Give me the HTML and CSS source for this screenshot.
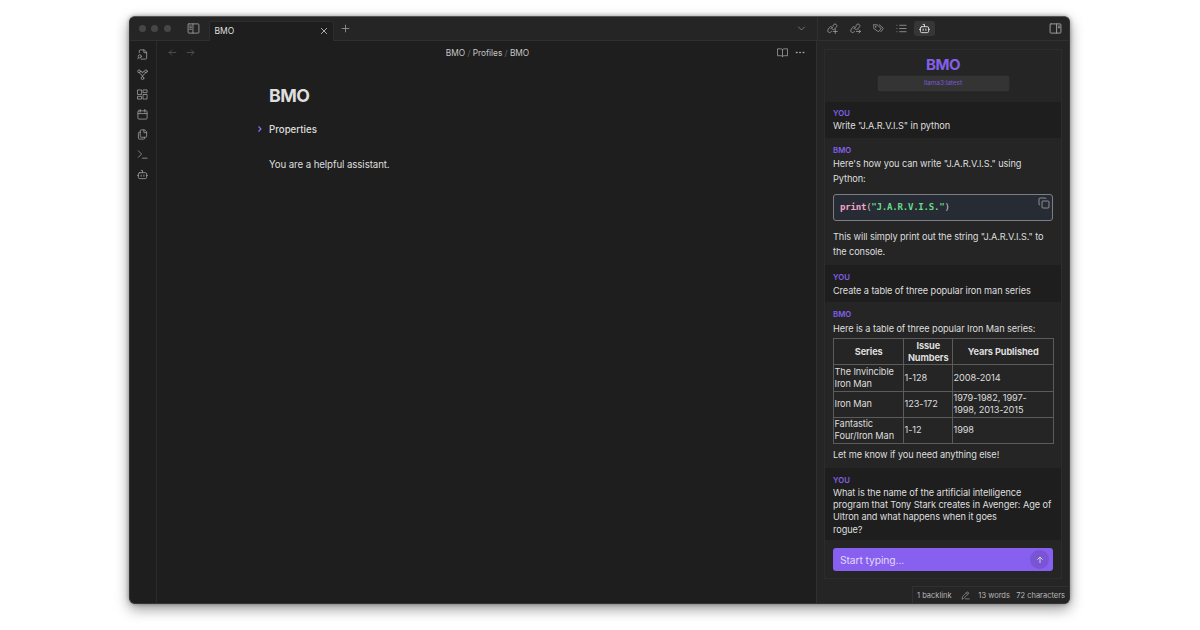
FILE: index.html
```html
<!DOCTYPE html>
<html lang="en">
<head>
<meta charset="utf-8">
<title>BMO</title>
<link rel="stylesheet" href="styles.css">
</head>
<body>
<div class="window">
  <header class="titlebar">
    <div class="lights"><i></i><i></i><i></i></div>
    <svg class="icon toggle-left" viewBox="0 0 24 24"><rect x="2" y="3.500" width="20" height="17" rx="1.500"/><path d="M11 3.500v17M5 7.500h3M5 10.500h3M5 13.500h3"/></svg>
    <div class="tab"><span>BMO</span><svg class="icon close" viewBox="0 0 24 24"><path d="M4 4l16 16M20 4L4 20"/></svg></div>
    <svg class="icon plus" viewBox="0 0 24 24"><path d="M12 3v18M3 12h18"/></svg>
    <svg class="icon chevron" viewBox="0 0 24 24"><path d="M4 8l8 8 8-8"/></svg>
    <div class="side-tabs">
      <svg class="icon" viewBox="0 0 24 24"><path d="M8 13l5-5M13 6l2-3a4 4 0 0 1 6 5l-4 5a4 4 0 0 1-6 0M11 9a4 4 0 0 0-6 1l-3 5a4 4 0 0 0 6 5l2-2M18 14v9M13.500 18.500h9"/></svg>
      <svg class="icon" viewBox="0 0 24 24"><path d="M8 13l5-5M13 6l2-3a4 4 0 0 1 6 5l-4 5a4 4 0 0 1-6 0M11 9a4 4 0 0 0-6 1l-3 5a4 4 0 0 0 6 5l2-2M14 18.500h9M19.500 15l3.500 3.500-3.500 3.500"/></svg>
      <svg class="icon" viewBox="0 0 24 24"><path d="M1 4h8l8 7a2 2 0 0 1 0 2l-4 5a2 2 0 0 1-3 0L1 11zM14 4l8 7a2 2 0 0 1 0 2l-5 6"/><circle cx="5.500" cy="8.500" r=".7"/></svg>
      <svg class="icon" viewBox="0 0 24 24"><path d="M8 5h14M8 12h14M8 19h14M2 5h.1M2 12h.1M2 19h.1"/></svg>
      <span class="active-tab"><svg class="icon bright" viewBox="0 0 24 24"><rect x="3" y="8" width="18" height="13" rx="3"/><path d="M12 8V3H9M1 14h2M21 14h2M9 13v3M15 13v3"/></svg></span>
    </div>
    <svg class="icon toggle-right" viewBox="0 0 24 24"><rect x="2" y="3.500" width="20" height="17" rx="1.500"/><path d="M14 3.500v17M17 7.500h3M17 10.500h3"/></svg>
  </header>
  <div class="body">
    <nav class="ribbon">
      <svg class="icon" viewBox="0 0 24 24"><path d="M5 8V4a2 2 0 0 1 2-2h9l5 5v13a2 2 0 0 1-2 2H9M15 2v6h6M4 19l-3 3"/><circle cx="6" cy="16" r="3.500"/></svg>
      <svg class="icon" viewBox="0 0 24 24"><circle cx="4.500" cy="5" r="3"/><circle cx="19.500" cy="5" r="3"/><circle cx="12" cy="20" r="3"/><path d="M5 8c0 4 7 3 7 9 0-6 7-5 7-9M10 5l2 4 2-4"/></svg>
      <svg class="icon" viewBox="0 0 24 24"><rect x="2" y="2" width="8" height="10"/><rect x="14" y="2" width="8" height="6"/><rect x="14" y="12" width="8" height="10"/><rect x="2" y="16" width="8" height="6"/></svg>
      <svg class="icon" viewBox="0 0 24 24"><rect x="2" y="4" width="20" height="18" rx="2"/><path d="M7 1v6M17 1v6M2 10h20"/></svg>
      <svg class="icon" viewBox="0 0 24 24"><path d="M16 2H9a2 2 0 0 0-2 2v12a2 2 0 0 0 2 2h10a2 2 0 0 0 2-2V7zM15 2v6h6M7 7H5a2 2 0 0 0-2 2v11a2 2 0 0 0 2 2h10a2 2 0 0 0 2-2v-2"/></svg>
      <svg class="icon" viewBox="0 0 24 24"><path d="M3 18l7-7-7-7M12 20h10"/></svg>
      <svg class="icon" viewBox="0 0 24 24"><rect x="3" y="8" width="18" height="13" rx="3"/><path d="M12 8V3H9M1 14h2M21 14h2M9 13v3M15 13v3"/></svg>
    </nav>
    <main class="editor">
      <div class="view-header">
        <div class="history"><svg class="icon" viewBox="0 0 24 24"><path d="M21 12H3M10 5l-7 7 7 7"/></svg><svg class="icon" viewBox="0 0 24 24"><path d="M3 12h18M14 5l7 7-7 7"/></svg></div>
        <div class="crumbs">BMO <b>/</b> Profiles <b>/</b> BMO</div>
        <div class="view-actions"><svg class="icon" viewBox="0 0 24 24"><path d="M12 6c-1-1.500-2-2-4-2H1v15h7c2 0 3 .5 4 2 1-1.500 2-2 4-2h7V4h-7c-2 0-3 .5-4 2zM12 6v15"/></svg><svg class="icon dots" viewBox="0 0 24 24"><circle cx="4" cy="12" r="1.300"/><circle cx="12" cy="12" r="1.300"/><circle cx="20" cy="12" r="1.300"/></svg></div>
      </div>
      <article class="note">
        <h1>BMO</h1>
        <div class="properties"><svg viewBox="0 0 8 8"><path d="M2.500 1.500L5 4 2.500 6.500"/></svg><span>Properties</span></div>
        <p>You are a helpful assistant.</p>
      </article>
    </main>
    <aside class="sidebar">
      <section class="chat">
        <div class="chat-head"><h2>BMO</h2><div class="model">llama3:latest</div></div>
        <div class="message user"><h3>YOU</h3><p>Write "J.A.R.V.I.S" in python</p></div>
        <div class="message bot first">
          <h3>BMO</h3>
          <p>Here's how you can write "J.A.R.V.I.S." using<br>Python:</p>
          <div class="code"><code><b>print</b>(<em>"J.A.R.V.I.S."</em>)</code><svg viewBox="0 0 24 24"><rect x="8" y="8" width="14" height="14" rx="2"/><path d="M4 16a2 2 0 0 1-2-2V4a2 2 0 0 1 2-2h10a2 2 0 0 1 2 2"/></svg></div>
          <p>This will simply print out the string "J.A.R.V.I.S." to<br>the console.</p>
        </div>
        <div class="message user second"><h3>YOU</h3><p>Create a table of three popular iron man series</p></div>
        <div class="message bot answer">
          <h3>BMO</h3>
          <p>Here is a table of three popular Iron Man series:</p>
          <table>
            <colgroup><col class="c1"><col class="c2"><col class="c3"></colgroup>
            <tr><th>Series</th><th>Issue<br>Numbers</th><th>Years Published</th></tr>
            <tr><td>The Invincible<br>Iron Man</td><td>1-128</td><td>2008-2014</td></tr>
            <tr><td>Iron Man</td><td>123-172</td><td>1979-1982, 1997-<br>1998, 2013-2015</td></tr>
            <tr><td>Fantastic<br>Four/Iron Man</td><td>1-12</td><td>1998</td></tr>
          </table>
          <p>Let me know if you need anything else!</p>
        </div>
        <div class="message user last"><h3>YOU</h3><p>What is the name of the artificial intelligence<br>program that Tony Stark creates in Avenger: Age of<br>Ultron and what happens when it goes<br>rogue?</p></div>
        <div class="prompt"><span>Start typing...</span><i><svg viewBox="0 0 24 24"><path d="M12 21V3M4 11l8-8 8 8"/></svg></i></div>
      </section>
      <footer class="status"><span>1 backlink</span><svg class="icon" viewBox="0 0 24 24"><path d="M12 21h10M3 21l1-6L16 3a3 3 0 0 1 4 4L8 19zM14 5l4 4"/></svg><span>13 words</span><span>72 characters</span></footer>
    </aside>
  </div>
</div>
</body>
</html>
```
FILE: styles.css
```css
* { box-sizing: border-box; }
body { margin: 0; width: 1200px; height: 630px; padding: 16px 130px 26px 129px; overflow: hidden; background: #fff; font-family: Inter, "Noto Sans", sans-serif; color: #dedede; }
h1, h2, h3, p { margin: 0; }
.window { height: 588px; border-radius: 6px; overflow: hidden; background: #1e1e1e; border: 1px solid #343434; border-top-color: #555; box-shadow: 0 5px 14px rgba(0,0,0,.4), 0 0 4px rgba(0,0,0,.35); display: flex; flex-direction: column; }
.icon { width: 11px; height: 11px; fill: none; stroke: #a4a4a4; stroke-width: 1.7; stroke-linecap: round; stroke-linejoin: round; flex: none; }
.titlebar { height: 24px; flex: none; display: flex; align-items: center; background: #252525; border-bottom: 1px solid #303030; }
.lights { display: flex; gap: 5.500px; margin-left: 8.500px; }
.lights i { width: 7px; height: 7px; border-radius: 50%; background: #464646; }
.toggle-left { width: 13px; height: 13px; margin-left: 16px; stroke: #999; }
.tab { width: 125px; height: 20px; margin: 4px 0 -1px 9px; padding: 0 5px 2px; background: #1e1e1e; border: 1px solid #2d2d2d; border-bottom: 0; border-radius: 3px 3px 0 0; display: flex; align-items: center; justify-content: space-between; font-size: 8.500px; }
.close { width: 8px; height: 8px; stroke-width: 2.700; stroke: #bbb; }
.plus { width: 9px; height: 9px; margin-left: 7px; stroke-width: 2; }
.chevron { width: 9px; height: 9px; margin-left: auto; }
.side-tabs { width: 118px; height: 23px; margin-left: 11px; padding-left: 9px; border-left: 1px solid #303030; display: flex; align-items: center; gap: 12px; }
.active-tab { width: 21px; height: 15px; margin-left: -5px; border-radius: 3px; background: #363636; display: flex; align-items: center; justify-content: center; }
.bright { stroke: #ddd; stroke-width: 2; }
.toggle-right { width: 13px; height: 13px; margin: 0 7px 0 114px; }
.body { flex: 1; min-height: 0; display: flex; }
.ribbon { width: 27px; flex: none; border-right: 1px solid #2a2a2a; padding: 7.500px 0 0 7px; display: flex; flex-direction: column; gap: 9px; }
.editor { flex: 1; min-width: 0; }
.view-header { height: 23px; padding: 0 12px 0 11px; display: grid; grid-template-columns: 1fr auto 1fr; align-items: center; }
.history { display: flex; gap: 9px; }
.history .icon { width: 9px; height: 9px; stroke: #666; }
.crumbs { font-size: 8.300px; color: #c6c6c6; white-space: nowrap; padding-left: 3px; }
.crumbs b { font-weight: 400; color: #666; }
.view-actions { display: flex; justify-content: flex-end; gap: 7px; margin-right: -1px; }
.dots { width: 10px; }
.view-actions .dots circle { fill: #aaa; }
.note { padding: 20px 0 0 112px; }
.note h1 { font-size: 17.800px; line-height: 24px; font-weight: 700; letter-spacing: -.5px; }
.properties { margin: 14px 0 0 -13px; height: 14px; display: flex; align-items: center; gap: 5px; font-size: 9.700px; font-weight: 500; }
.properties svg { width: 8px; height: 8px; fill: none; stroke: #9173f5; stroke-width: 1.100; }
.note p { margin-top: 22px; font-size: 9.700px; line-height: 14px; letter-spacing: -.09px; }
.sidebar { width: 253px; flex: none; background: #252525; border-left: 1px solid #303030; display: flex; flex-direction: column; }
.chat { width: 238px; height: 530px; margin: 8px 0 0 7px; border: 1px solid #2c2c2c; display: flex; flex-direction: column; font-size: 9.200px; letter-spacing: -.09px; }
.chat-head { height: 52px; flex: none; display: flex; flex-direction: column; align-items: center; padding-top: 5px; }
.chat-head h2 { color: #8260e8; font-size: 15px; line-height: 20px; letter-spacing: -.5px; }
.model { width: 131px; height: 15px; margin-top: 1px; border-radius: 3px; background: #343434; box-shadow: 0 0 1px #555; color: #7859d0; font-size: 6.600px; line-height: 15px; text-align: center; }
.message { flex: none; padding: 0 8px; white-space: nowrap; }
.message h3 { color: #8260e8; font-size: 7.700px; line-height: 10px; font-weight: 600; letter-spacing: .1px; }
.user { height: 36px; padding-top: 7px; background: #1e1e1e; }
.user p { line-height: 12.200px; margin-top: 1px; }
.bot { padding-top: 7.500px; }
.bot p { line-height: 15px; }
.first { height: 127px; }
.first > p:first-of-type { margin-top: 0; }
.code { height: 27px; margin: 8px 0 8.500px; padding: 0 2px 0 6px; border: 1px solid #7b7e83; border-radius: 3px; background: #272b33; display: flex; justify-content: space-between; }
.code code { font: 9.200px/24px "DejaVu Sans Mono", monospace; letter-spacing: -.03px; font-size: 9.150px; letter-spacing: -.27px; color: #ccc; }
.code b { color: #f4a3ca; }
.code em { color: #66d987; font-style: normal; font-weight: 700; }
.code svg { width: 12px; height: 12px; margin-top: 2px; fill: none; stroke: #999; stroke-width: 1.800; }
.second { height: 37px; padding-top: 8px; }
.second p { margin-top: 2px; }
.answer { height: 166px; }
.answer p:first-of-type { margin-top: 1px; }
table { width: 220px; margin: 2.500px 0 3px; border-collapse: collapse; table-layout: fixed; line-height: 12px; }
.c1 { width: 70px; } .c2 { width: 49px; } .c3 { width: 101px; }
tr { height: 26.250px; }
td, th { padding: 0 0 0 .5px; border: 1px solid #5b5b5b; }
.last { height: 72px; padding-top: 8px; }
.prompt { height: 23px; flex: none; margin: 8px 8px 0; padding: 0 4px 0 7px; border-radius: 3px; background: #8860ef; display: flex; align-items: center; justify-content: space-between; color: #e3daf8; font-size: 10.300px; }
.prompt i { width: 19px; height: 19px; border-radius: 50%; background: #7954d5; display: flex; align-items: center; justify-content: center; }
.prompt svg { width: 8px; height: 8px; fill: none; stroke: #ddd; stroke-width: 2.700; }
.status { width: 157px; height: 17px; margin: auto 0 0 auto; padding: 1px 4px 0; border: 1px solid #303030; border-width: 1px 0 0 1px; display: flex; align-items: center; justify-content: space-between; font-size: 7.500px; color: #b8b8b8; white-space: nowrap; }
.status .icon { width: 9px; height: 9px; margin: 0 2px 0 3px; }
```
